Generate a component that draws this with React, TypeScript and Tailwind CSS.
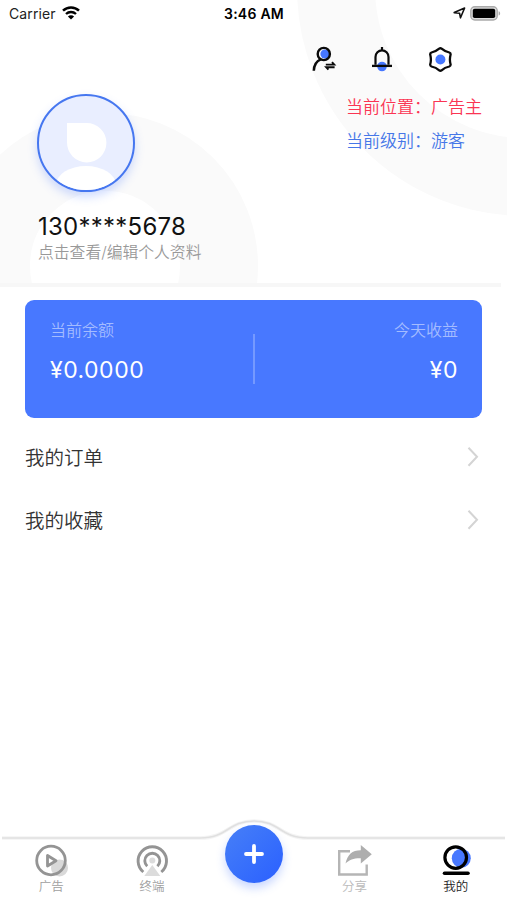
import React from "react";

const menuItems = [
  { id: 1, name: "我的订单" },
  { id: 2, name: "我的收藏" },
];

const StatusBar = () => {
  return (
    <div className="grid h-7 grid-cols-3 items-center pl-[9px] pr-[6px] text-[14px] text-[#222]">
      <div className="flex items-center gap-[6px]">
        <span className="-mt-0.5 tracking-[0.1px]">Carrier</span>
        <svg className="-mt-0.5" width="18" height="14" viewBox="0 0 18 14" fill="none">
          <path d="M1 4.7a11.5 11.5 0 0 1 16 0" stroke="#000" strokeWidth="2.5" />
          <path d="M4 8a7.2 7.2 0 0 1 10 0" stroke="#000" strokeWidth="2.3" />
          <path d="M9 13.6 5.9 10.5a4.4 4.4 0 0 1 6.2 0Z" fill="#000" />
        </svg>
      </div>
      <div className="-mt-0.5 -ml-0.5 text-center font-semibold tracking-[0.25px] text-black">3:46 AM</div>
      <div className="-mt-0.5 flex items-center justify-end gap-1">
        <svg width="13" height="12" viewBox="0 0 13 12" fill="none">
          <path d="M1.2 5.6 11.6 1 7.5 10.8 6.6 6.3Z" stroke="#111" strokeWidth="1.6" strokeLinejoin="round" />
        </svg>
        <svg width="31" height="15" viewBox="0 0 31 15">
          <rect x="0.8" y="0.8" width="26.4" height="13.2" rx="4" fill="#ddd" stroke="#aaa" strokeWidth="1.4" />
          <rect x="2.8" y="2.8" width="22.4" height="9.2" rx="1.8" fill="#000" />
          <path d="M28.6 5.2c2 .6 2 3.8 0 4.4Z" fill="#aaa" />
        </svg>
      </div>
    </div>
  );
};

const HeaderIcons = () => {
  return (
    <div className="flex h-[26px] gap-[32px] pl-[311px]">
      <svg width="26" height="26" viewBox="0 0 26 26" fill="none">
        <circle cx="13.9" cy="8" r="4.5" fill="#4677ff" />
        <circle cx="12.8" cy="8" r="6.1" stroke="#0a0a0a" strokeWidth="2.4" />
        <path d="M9.7 13.3C5 15.3 3 19 2.8 24.8" stroke="#0a0a0a" strokeWidth="2.5" />
        <path d="M14.8 18.6h8.4l-2.200-2.400M23.600 21.200h-8.400l2.200 2.400" stroke="#0a0a0a" strokeWidth="1.900" />
      </svg>
      <svg width="26" height="26" viewBox="0 0 26 26" fill="none">
        <circle cx="13" cy="20.5" r="4.8" fill="#4677ff" />
        <path d="M13 1v3M6.5 18.8v-7.8a6.5 6.7 0 0 1 13 0v7.8" stroke="#0a0a0a" strokeWidth="2.2" />
        <path d="M3 19.9h20" stroke="#0a0a0a" strokeWidth="2.3" />
      </svg>
      <svg width="26" height="26" viewBox="0 0 26 26" fill="none">
        <path
          d="M12.200 2.700Q13.400 1.700 14.600 2.700Q17.800 5.500 22.300 6.500Q24 7.200 23.500 9Q22.300 13.500 23.500 18Q24 19.800 22.300 20.500Q17.800 21.500 14.600 24.300Q13.400 25.300 12.200 24.300Q9 21.500 4.500 20.500Q2.800 19.800 3.300 18Q4.500 13.500 3.300 9Q2.800 7.200 4.500 6.500Q9 5.500 12.200 2.700Z"
          stroke="#0a0a0a"
          strokeWidth="2.3"
          strokeLinejoin="round"
        />
        <circle cx="13.4" cy="13.5" r="5" fill="#4677ff" />
      </svg>
    </div>
  );
};

const Profile = () => {
  return (
    <header className="relative h-[283px] overflow-hidden">
      <svg className="absolute inset-0 -z-10" width="507" height="283" fill="none">
        <circle cx="105" cy="266" r="114" stroke="#fafafa" strokeWidth="78" />
        <circle cx="525" cy="-12" r="189" stroke="#fafafa" strokeWidth="78" />
      </svg>
      <StatusBar />
      <div className="pt-[18px]">
        <HeaderIcons />
      </div>
      <div className="flex justify-between pl-[37px] pr-[25px] pt-[21px]">
        <div className="mt-px h-[98px] w-[98px] overflow-hidden rounded-full border-2 border-[#4677f0] bg-[#e9eeff] shadow-[0_5px_10px_rgba(70,119,255,0.25)]">
          <svg width="94" height="94" viewBox="0 0 94 94" fill="#fff">
            <path d="M28 27h19.5a19.7 19.7 0 1 1-19.5 19.5Z" />
            <ellipse cx="47" cy="89" rx="30" ry="19" />
          </svg>
        </div>
        <div className="-mt-[3px] w-[136px] whitespace-nowrap text-[17px] font-[350] leading-[34px]">
          <p className="text-[#fa3553]">当前位置：广告主</p>
          <p className="text-[#4677e8]">当前级别：游客</p>
        </div>
      </div>
      <div className="pl-[38px] pt-[18px]">
        <p className="text-[24px] leading-[34px] tracking-[0.25px] text-[#111]">130****5678</p>
        <p className="-mt-px text-[15.8px] font-[350] leading-5 text-[#999]">点击查看/编辑个人资料</p>
      </div>
    </header>
  );
};

const BalanceCard = () => {
  return (
    <section className="mx-[25px] mt-[13px] flex h-[118px] justify-between rounded-[9px] bg-[#4878ff] px-[25px] pt-[18px]">
      <div className="w-[180px]">
        <p className="text-[16px] font-[350] leading-6 text-[#a4bcff]">当前余额</p>
        <p className="mt-[11px] text-[23px] leading-[34px] tracking-[0.5px] text-white">¥0.0000</p>
      </div>
      <div className="mt-4 h-[50px] w-[2px] bg-[#7599ff]" />
      <div className="-mr-px w-[180px] text-right">
        <p className="text-[16px] font-[350] leading-6 text-[#a4bcff]">今天收益</p>
        <p className="mt-[11px] text-[23px] leading-[34px] tracking-[0.5px] text-white">¥0</p>
      </div>
    </section>
  );
};

const TabBar = () => {
  return (
    <nav className="relative h-[84px]">
      <svg className="absolute left-0 top-0" width="507" height="84" fill="none">
        <path
          d="M2 22H200C228 22 228 5 254 5S280 22 308 22H505"
          stroke="#f4f4f4"
          strokeWidth="3.6"
        />
        <path
          d="M2 22H200C228 22 228 5 254 5S280 22 308 22H505"
          stroke="#e0e0e0"
          strokeWidth="1.6"
        />
      </svg>
      <div className="relative grid h-full grid-cols-5 text-center text-[12.5px] font-[350] text-[#a0a0a0]">
        <div className="flex flex-col items-center pl-px pt-[27px]">
          <svg width="36" height="36" viewBox="0 0 36 36" fill="none">
            <circle cx="26.5" cy="25" r="8.5" fill="#d9d9d9" />
            <circle cx="18" cy="17.5" r="14.3" stroke="#949494" strokeWidth="2.8" />
            <path d="M14.5 12.5v10.5l8.5-5.2Z" stroke="#949494" strokeWidth="2.8" strokeLinejoin="round" />
          </svg>
          <span className="leading-4">广告</span>
        </div>
        <div className="flex flex-col items-center pt-[27px]">
          <svg width="36" height="36" viewBox="0 0 36 36" fill="none">
            <path d="M9.3 29A14.2 14.2 0 1 1 27.3 29" stroke="#949494" strokeWidth="2.9" />
            <path d="M13.2 23.3a7.5 7.5 0 1 1 10.2 0" stroke="#949494" strokeWidth="2.9" />
            <circle cx="18.3" cy="17.5" r="3" fill="#dcdcdc" />
            <path d="m18.3 22 8 11h-16Z" fill="#dcdcdc" />
          </svg>
          <span className="leading-4">终端</span>
        </div>
        <div className="flex justify-center pl-px pt-[9px]">
          <button className="flex h-[58px] w-[58px] items-center justify-center rounded-full bg-linear-to-br from-[#477ff7] to-[#2b5fff] shadow-[0_5px_10px_rgba(60,110,255,0.28)]">
            <svg width="20" height="20" viewBox="0 0 20 20">
              <path d="M10 2v16M2 10h16" stroke="#fff" strokeWidth="3.8" strokeLinecap="round" />
            </svg>
          </button>
        </div>
        <div className="flex flex-col items-center pr-px pt-[27px]">
          <svg width="36" height="36" viewBox="0 0 36 36" fill="none">
            <path d="M14 8.3H3.2V31.5h27.5V21.5" stroke="#b5b5b5" strokeWidth="2.4" />
            <path d="M9.5 20.5C11.5 11.5 16 7.2 24.8 7.2V2l11 9.2-11 9.3v-5.2c-7-.2-11.3 1.6-15.3 5.2Z" fill="#aeaeae" />
          </svg>
          <span className="leading-4 text-[#bbb]">分享</span>
        </div>
        <div className="flex flex-col items-center pr-px pt-[27px]">
          <svg width="36" height="36" viewBox="0 0 36 36" fill="none">
            <circle cx="23.3" cy="15.2" r="9.5" fill="#4878ff" />
            <circle cx="17.7" cy="14.6" r="10.8" stroke="#000" strokeWidth="3.2" />
            <path d="M6.5 30.3h23.5" stroke="#000" strokeWidth="3.6" strokeLinecap="round" />
          </svg>
          <span className="leading-4 text-[#222]">我的</span>
        </div>
      </div>
    </nav>
  );
};

const App = () => {
  return (
    <div className="isolate flex h-[900px] w-[507px] flex-col overflow-hidden bg-white font-['Inter','Noto_Sans_CJK_SC',sans-serif]">
      <Profile />
      <div className="-mb-1 mr-[6px] h-1 bg-[#f7f7f7]" />
      <main className="grow pt-1">
        <BalanceCard />
        <ul className="pl-[25px] pr-[28px] pt-[7px]">
          {menuItems.map((item) => (
            <li key={item.id} className="flex h-[63.5px] items-center justify-between text-[19.5px] font-[350] text-[#333]">
              <span className="mt-[3px]">{item.name}</span>
              <svg width="12" height="22" viewBox="0 0 12 22" fill="none">
                <path d="m1.5 1.8 8.5 9-8.5 9" stroke="#d4d4d4" strokeWidth="2" />
              </svg>
            </li>
          ))}
        </ul>
      </main>
      <TabBar />
    </div>
  );
};

export default App;
